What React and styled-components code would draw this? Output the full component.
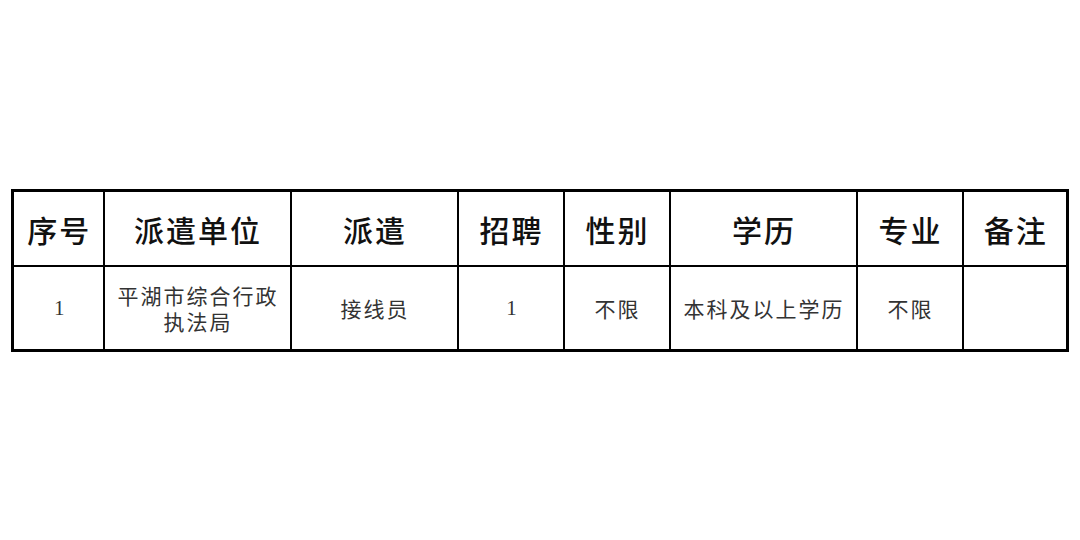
import styled, { createGlobalStyle } from "styled-components";

const GlobalStyle = createGlobalStyle`
  html, body {
    margin: 0;
    padding: 0;
    background: #ffffff;
  }
`;

const columns = [
  { title: "序号", width: 91 },
  { title: "派遣单位", width: 187 },
  { title: "派遣", width: 167 },
  { title: "招聘", width: 106 },
  { title: "性别", width: 106 },
  { title: "学历", width: 187 },
  { title: "专业", width: 106 },
  { title: "备注", width: 105 },
];

const rows = [
  ["1", "平湖市综合行政\n执法局", "接线员", "1", "不限", "本科及以上学历", "不限", ""],
];

export default function App() {
  return (
    <>
      <GlobalStyle />
      <Page>
        <StyledTable>
          <colgroup>
            {columns.map((col) => (
              <col key={col.title} style={{ width: col.width }} />
            ))}
          </colgroup>
          <thead>
            <tr>
              {columns.map((col) => (
                <HeaderCell key={col.title}>{col.title}</HeaderCell>
              ))}
            </tr>
          </thead>
          <tbody>
            {rows.map((row, i) => (
              <tr key={i}>
                {row.map((value, j) => (
                  <BodyCell key={j} $numeric={/^\d+$/.test(value)}>
                    {value}
                  </BodyCell>
                ))}
              </tr>
            ))}
          </tbody>
        </StyledTable>
      </Page>
    </>
  );
}

const Page = styled.div`
  width: 1080px;
  height: 540px;
  box-sizing: border-box;
  padding: 189px 12px 0 11px;
`;

const StyledTable = styled.table`
  table-layout: fixed;
  border-collapse: collapse;
  width: 1057px;
  border: 3px solid #000;
`;

const HeaderCell = styled.th`
  height: 73px;
  padding: 0 0 0 2px;
  border: 2.5px solid #000;
  text-align: center;
  vertical-align: middle;
  font-family: "Noto Sans CJK SC", sans-serif;
  font-weight: 500;
  font-size: 30px;
  letter-spacing: 2px;
  color: #111;
`;

const BodyCell = styled.td`
  height: 82px;
  padding: 0 0 0 2px;
  border: 2.5px solid #000;
  text-align: center;
  vertical-align: middle;
  white-space: pre-line;
  font-family: ${(props) =>
    props.$numeric
      ? `"Liberation Serif", serif`
      : `"Noto Sans CJK SC", sans-serif`};
  font-size: 21px;
  line-height: 26px;
  letter-spacing: ${(props) => (props.$numeric ? "0" : "2px")};
  color: #333;
`;
